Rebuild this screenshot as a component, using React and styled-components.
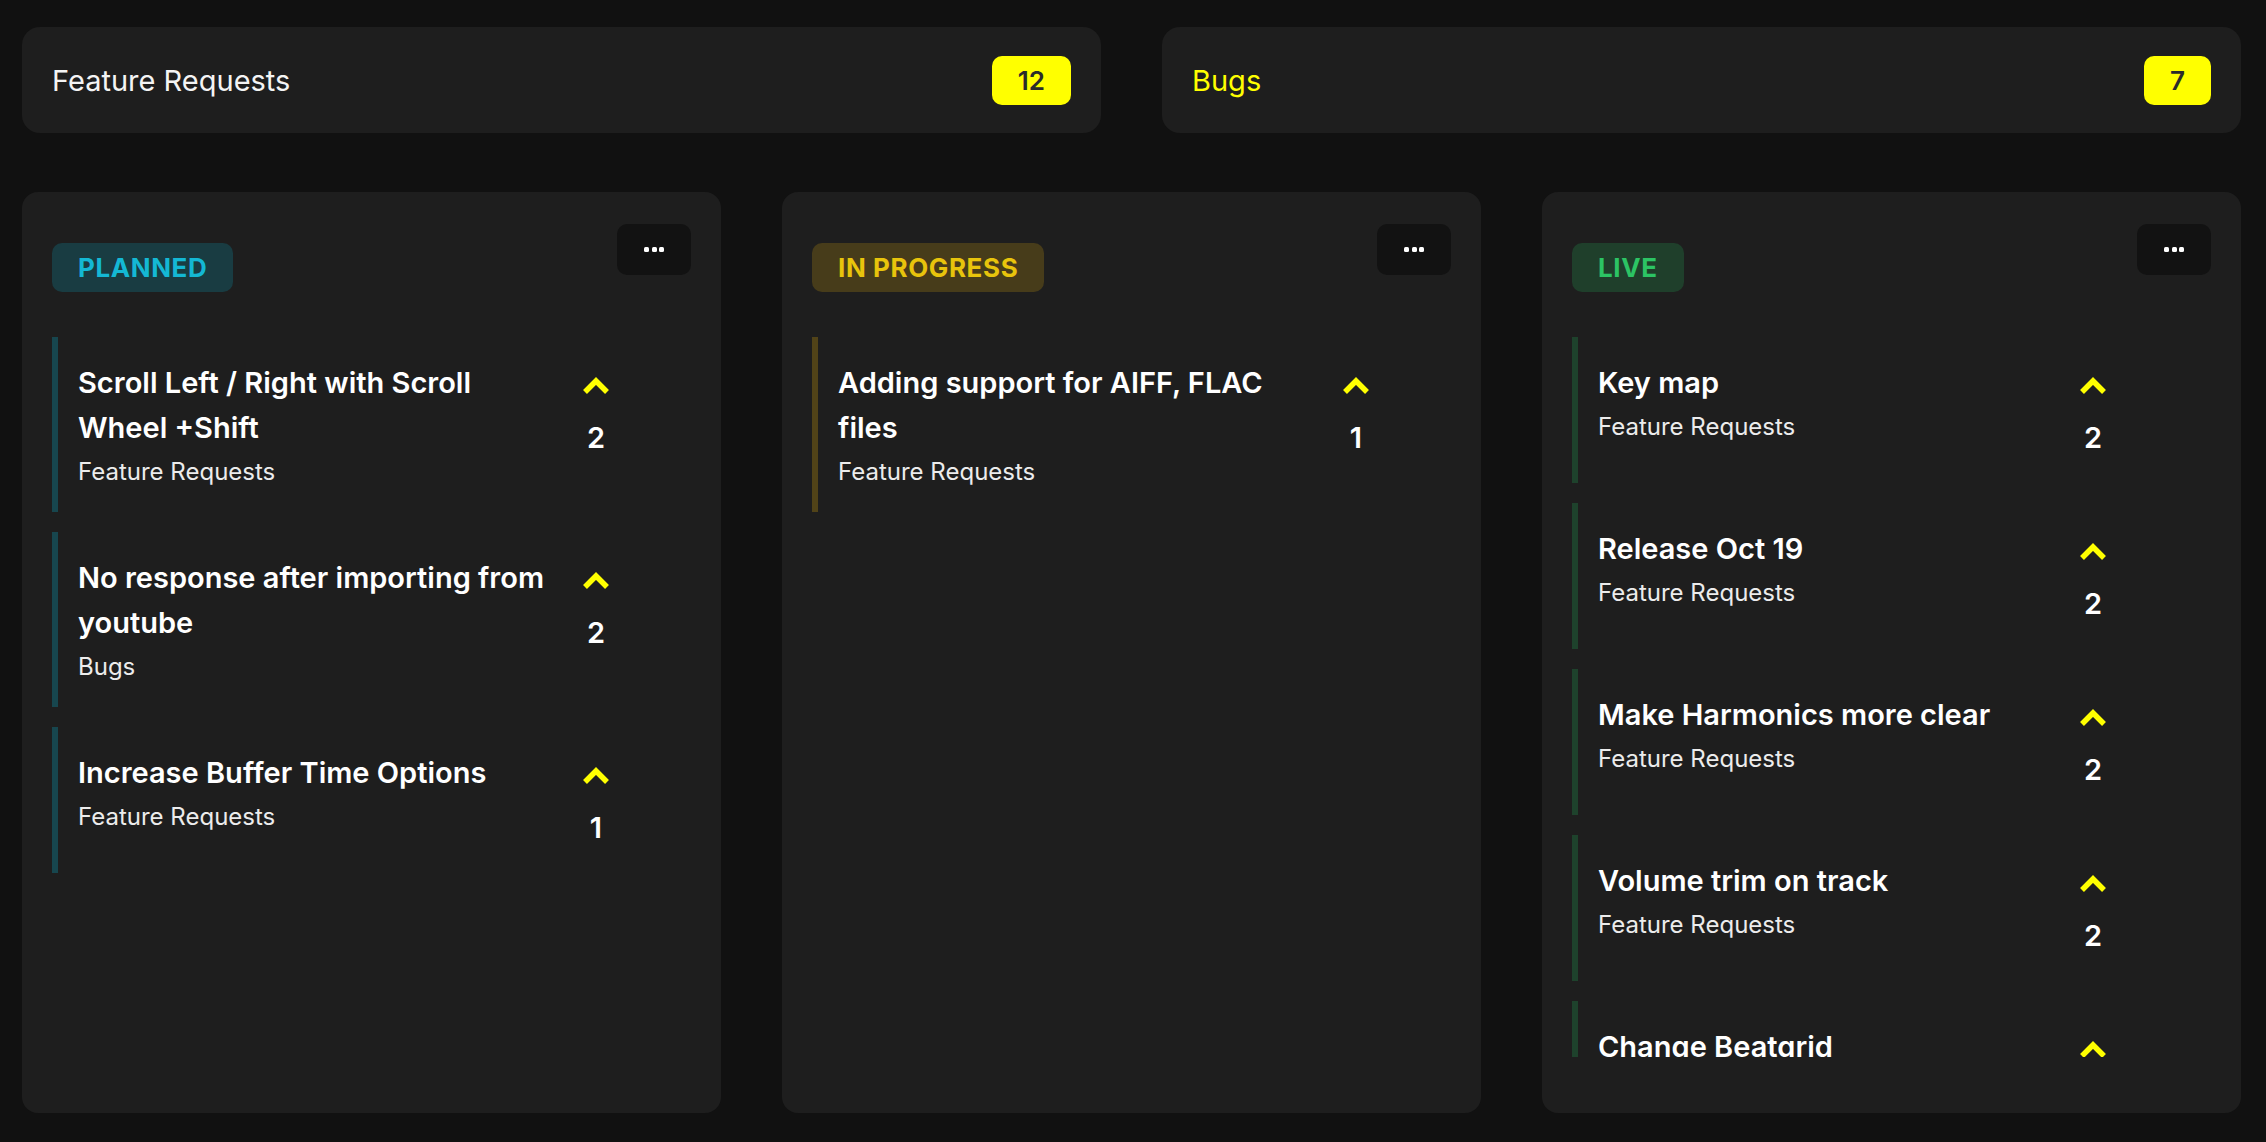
import React from 'react';
import styled, { createGlobalStyle } from 'styled-components';

const GlobalStyle = createGlobalStyle`
  * { box-sizing: border-box; }
  html, body { margin: 0; padding: 0; background: #111111; }
  body { font-family: Inter, "Noto Sans", "Liberation Sans", sans-serif; color: #fff; }
`;

const Page = styled.main`
  height: 100vh;
  display: flex;
  flex-direction: column;
  gap: 59px;
  padding: 27px 25px 29px 22px;
`;

const Summary = styled.div`
  display: grid;
  grid-template-columns: 1fr 1fr;
  gap: 61px;
`;

const SummaryCard = styled.div`
  height: 106px;
  display: flex; align-items: center; justify-content: space-between;
  padding: 0 30px;
  background: #1e1e1e;
  border-radius: 18px;
`;

const SummaryTitle = styled.div`
  font-size: 29px;
  font-weight: 400;
  color: ${p => (p.$accent ? '#ffff00' : '#f4f4f4')};
`;

const CountBadge = styled.div`
  height: 49px;
  display: flex; align-items: center; justify-content: center;
  padding: 0 26px;
  background: #ffff00;
  color: #2b2b2b;
  border-radius: 10px;
  font-size: 26px; font-weight: 600;
`;

const Board = styled.div`
  flex: 1; min-height: 0;
  display: grid;
  grid-template-columns: repeat(3, 1fr);
  gap: 61px;
`;

const Column = styled.section`
  display: flex; flex-direction: column;
  min-height: 0;
  padding: 32px 30px 56px;
  background: #1e1e1e;
  border-radius: 16px;
`;

const ColumnHead = styled.div`
  display: flex; justify-content: space-between; align-items: flex-start;
`;

const StatusLabel = styled.div`
  margin-top: 19px;
  height: 49px;
  display: flex; align-items: center;
  padding: 0 26px;
  border-radius: 10px;
  background: ${p => p.$tone.bg};
  color: ${p => p.$tone.fg};
  font-size: 26px; font-weight: 700; letter-spacing: 0.6px;
`;

const MoreButton = styled.button`
  width: 74px; height: 51px;
  display: flex; align-items: center; justify-content: center; gap: 2.5px;
  background: #121212;
  border: none; border-radius: 10px;
  padding: 0; cursor: pointer;
`;

const Dot = styled.span`
  width: 5px; height: 5px;
  border-radius: 1.5px;
  background: #fff;
`;

const List = styled.div`
  flex: 1; min-height: 0;
  margin-top: 45px;
  padding-right: ${p => (p.$scroll ? '23px' : '0')};
  display: flex; flex-direction: column; gap: 20px;
  overflow: hidden;
`;

const Post = styled.article`
  flex-shrink: 0;
  display: flex; gap: 20px;
  padding: 23px 65px 23px 20px;
  border-left: 6px solid ${p => p.$bar};
`;

const PostBody = styled.div`
  flex: 1; min-width: 0;
`;

const PostTitle = styled.div`
  font-size: 29px; font-weight: 600; line-height: 45px;
  color: #fff;
`;

const PostBoard = styled.div`
  margin-top: 4px;
  font-size: 24px; line-height: 35px;
  color: #ececec;
`;

const Vote = styled.div`
  width: 60px;
  display: flex; flex-direction: column; align-items: center;
`;

const VoteArrow = styled.button`
  height: 51px; width: 60px;
  display: flex; align-items: center; justify-content: center;
  background: none; border: none; padding: 0; cursor: pointer;
`;

const VoteCount = styled.div`
  padding-top: 5px;
  font-size: 29px; font-weight: 600; line-height: 44px;
  color: #fff;
`;

const tones = {
  planned: { bg: 'rgba(6, 182, 212, 0.2)', fg: '#14b8d4', bar: 'rgba(6, 182, 212, 0.27)' },
  progress: { bg: 'rgba(234, 179, 8, 0.2)', fg: '#e8c40c', bar: 'rgba(234, 179, 8, 0.25)' },
  live: { bg: 'rgba(34, 197, 94, 0.2)', fg: '#2cc464', bar: 'rgba(34, 197, 94, 0.22)' },
};

const columns = [
  {
    key: 'planned', label: 'PLANNED',
    posts: [
      { title: 'Scroll Left / Right with Scroll Wheel +Shift', board: 'Feature Requests', votes: 2 },
      { title: 'No response after importing from youtube', board: 'Bugs', votes: 2 },
      { title: 'Increase Buffer Time Options', board: 'Feature Requests', votes: 1 },
    ],
  },
  {
    key: 'progress', label: 'IN PROGRESS',
    posts: [
      { title: 'Adding support for AIFF, FLAC files', board: 'Feature Requests', votes: 1 },
    ],
  },
  {
    key: 'live', label: 'LIVE', scroll: true,
    posts: [
      { title: 'Key map', board: 'Feature Requests', votes: 2 },
      { title: 'Release Oct 19', board: 'Feature Requests', votes: 2 },
      { title: 'Make Harmonics more clear', board: 'Feature Requests', votes: 2 },
      { title: 'Volume trim on track', board: 'Feature Requests', votes: 2 },
      { title: 'Change Beatgrid', board: 'Feature Requests', votes: 2 },
    ],
  },
];

function Chevron() {
  return (
    <svg width="28" height="19" viewBox="0 0 28 19">
      <polyline points="3,16 14,5 25,16" fill="none" stroke="#ffff00" strokeWidth="5.5" strokeLinejoin="miter" />
    </svg>
  );
}

function RoadmapColumn({ column }) {
  const tone = tones[column.key];
  return (
    <Column>
      <ColumnHead>
        <StatusLabel $tone={tone}>{column.label}</StatusLabel>
        <MoreButton aria-label="more">
          <Dot /><Dot /><Dot />
        </MoreButton>
      </ColumnHead>
      <List $scroll={column.scroll}>
        {column.posts.map(post => (
          <Post key={post.title} $bar={tone.bar}>
            <PostBody>
              <PostTitle>{post.title}</PostTitle>
              <PostBoard>{post.board}</PostBoard>
            </PostBody>
            <Vote>
              <VoteArrow aria-label="upvote"><Chevron /></VoteArrow>
              <VoteCount>{post.votes}</VoteCount>
            </Vote>
          </Post>
        ))}
      </List>
    </Column>
  );
}

export default function App() {
  return (
    <>
      <GlobalStyle />
      <Page>
        <Summary>
          <SummaryCard>
            <SummaryTitle>Feature Requests</SummaryTitle>
            <CountBadge>12</CountBadge>
          </SummaryCard>
          <SummaryCard>
            <SummaryTitle $accent>Bugs</SummaryTitle>
            <CountBadge>7</CountBadge>
          </SummaryCard>
        </Summary>
        <Board>
          {columns.map(c => <RoadmapColumn key={c.key} column={c} />)}
        </Board>
      </Page>
    </>
  );
}
